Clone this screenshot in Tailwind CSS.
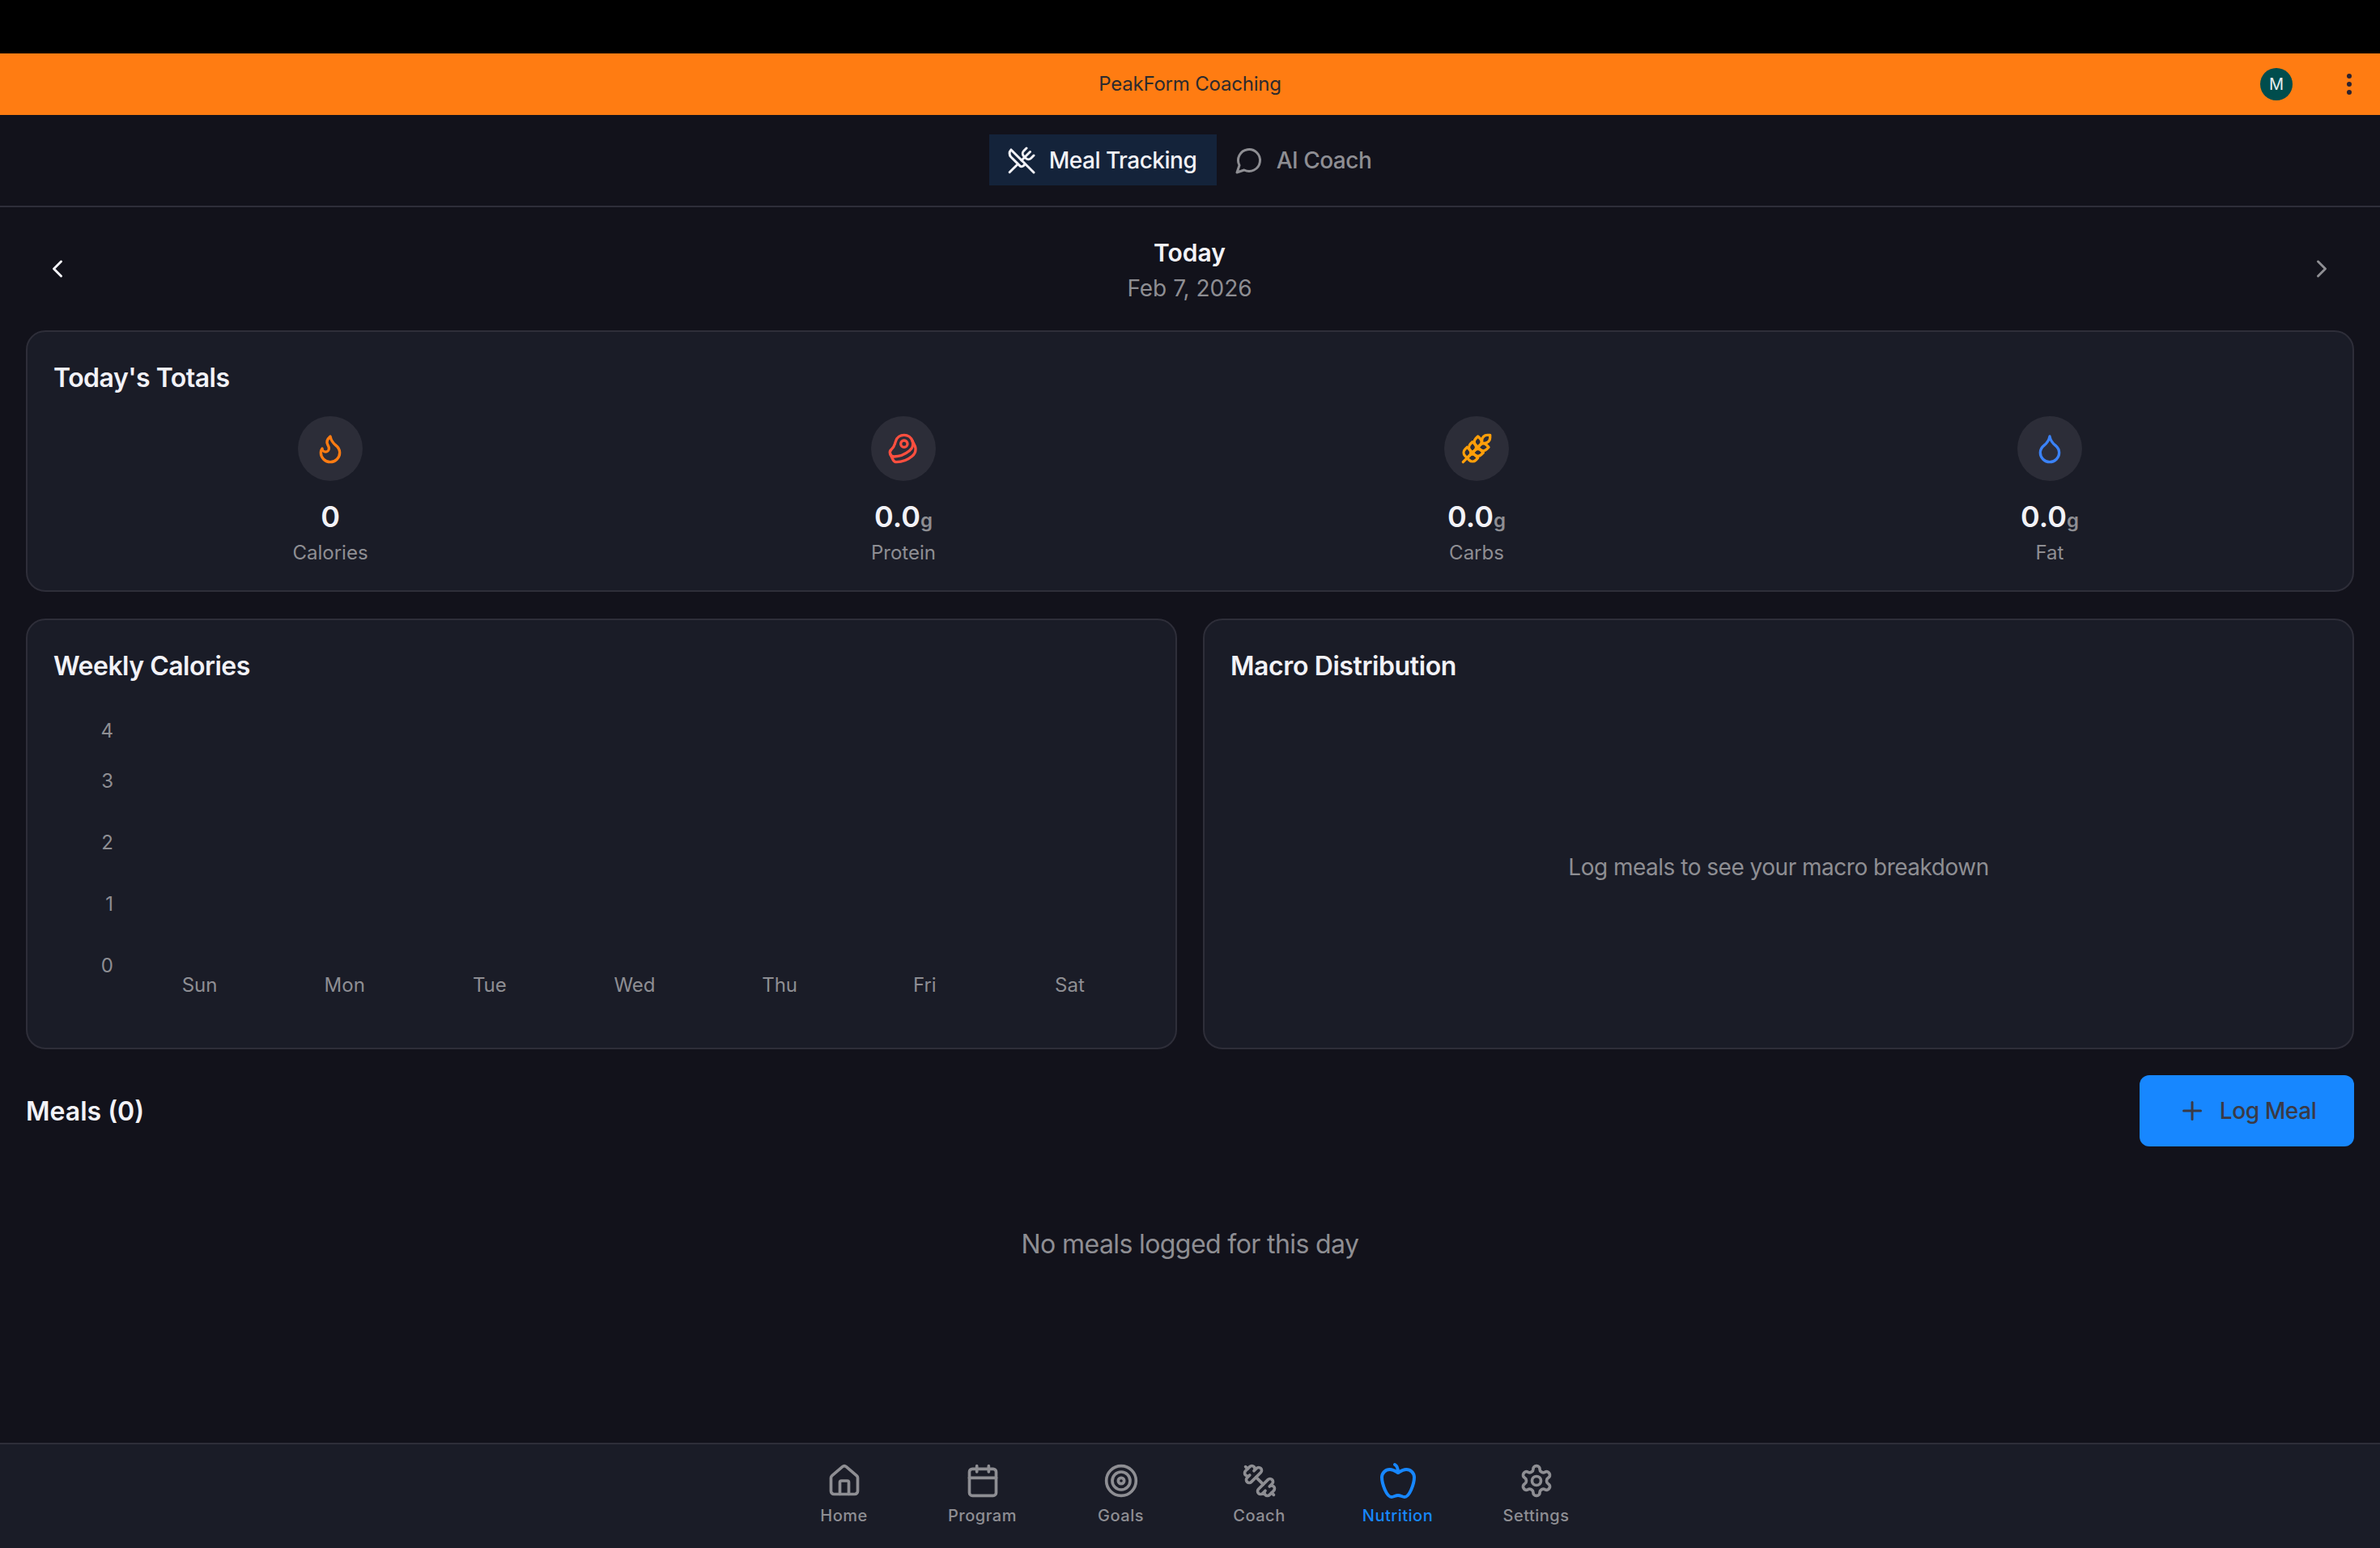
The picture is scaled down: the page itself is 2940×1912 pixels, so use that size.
<!DOCTYPE html>
<html lang="en">
<head>
  <meta charset="UTF-8">
  <title>PeakForm Coaching</title>
  <script src="https://cdn.jsdelivr.net/npm/@tailwindcss/browser@4"></script>
</head>
<body class="bg-black font-['Inter',sans-serif]">
<div class="w-[2940px] h-[1912px] flex flex-col overflow-hidden">

  <!-- status bar -->
  <div class="h-[66px] bg-black"></div>

  <!-- org banner -->
  <header class="relative h-[76px] bg-[#ff7c12] flex items-center justify-center">
    <span class="text-[24px] tracking-[-0.2px] text-[#2c2a2e]">PeakForm Coaching</span>
    <div class="absolute left-[2792px] top-[18px] w-[40px] h-[40px] rounded-full bg-[#004d4d] flex items-center justify-center text-[20px] text-[#e8f0f0]">M</div>
    <div class="absolute left-[2899px] top-[25px] flex flex-col gap-[4px]">
      <span class="w-[6px] h-[6px] rounded-full bg-[#2c2230]"></span>
      <span class="w-[6px] h-[6px] rounded-full bg-[#2c2230]"></span>
      <span class="w-[6px] h-[6px] rounded-full bg-[#2c2230]"></span>
    </div>
  </header>

  <!-- tabs -->
  <nav class="h-[114px] bg-[#12121b] border-b-2 border-[#2e2e39] flex items-start justify-center pt-[24px]">
    <div class="flex items-center h-[63px] w-[281px] pl-[22px] gap-[16px] bg-[#14233a] text-[#f2f2f7]">
      <svg class="w-[36px] h-[36px]" viewBox="0 0 24 24" fill="none" stroke="currentColor" stroke-width="2" stroke-linecap="round" stroke-linejoin="round"><path d="m16 2-2.3 2.3a3 3 0 0 0 0 4.2l1.8 1.8a3 3 0 0 0 4.2 0L22 8"/><path d="M15 15 3.3 3.3a4.2 4.2 0 0 0 0 6l7.3 7.3c.7.7 2 .7 2.8 0L15 15Zm0 0 7 7"/><path d="m2.1 21.8 6.4-6.3"/><path d="m19 5-7 7"/></svg>
      <span class="text-[28px] font-medium tracking-[-0.5px]">Meal Tracking</span>
    </div>
    <div class="flex items-center h-[63px] pl-[22px] pr-[24px] gap-[16px] text-[#8e8e93]">
      <svg class="w-[36px] h-[36px]" viewBox="0 0 24 24" fill="none" stroke="currentColor" stroke-width="2" stroke-linecap="round" stroke-linejoin="round"><path d="M7.9 20A9 9 0 1 0 4 16.1L2 22Z"/></svg>
      <span class="text-[28px] font-medium tracking-[-0.5px]">AI Coach</span>
    </div>
  </nav>

  <main class="flex-1 bg-[#12121b] px-[32px] pt-[38px]">

    <!-- date switcher -->
    <div class="flex items-center justify-between h-[114px] pb-[36px]">
      <svg class="w-[36px] h-[36px] ml-[21px] -mt-[3px] text-[#f2f2f7]" viewBox="0 0 24 24" fill="none" stroke="currentColor" stroke-width="2" stroke-linecap="round" stroke-linejoin="round"><path d="m15 18-6-6 6-6"/></svg>
      <div class="flex flex-col items-center">
        <span class="text-[30px] leading-[40px] font-semibold text-[#f2f2f7]">Today</span>
        <span class="text-[28px] leading-[36px] mt-[6px] text-[#8e8e93]">Feb 7, 2026</span>
      </div>
      <svg class="w-[36px] h-[36px] mr-[22px] -mt-[3px] text-[#8e8e93]" viewBox="0 0 24 24" fill="none" stroke="currentColor" stroke-width="2" stroke-linecap="round" stroke-linejoin="round"><path d="m9 18 6-6-6-6"/></svg>
    </div>

    <!-- today's totals -->
    <section class="h-[323px] rounded-[24px] border-2 border-[#2e2e39] bg-[#1a1c27] px-[32px] pt-[32px]">
      <h2 class="text-[32px] leading-[50px] font-semibold tracking-[-0.5px] text-[#f2f2f7]">Today's Totals</h2>
      <div class="grid grid-cols-4 -mx-[12px] mt-[22px]">
        <div class="flex flex-col items-center">
          <div class="w-[80px] h-[80px] rounded-full bg-[#2c2d38] flex items-center justify-center text-[#ff7c12]">
            <svg class="w-[40px] h-[40px]" viewBox="0 0 24 24" fill="none" stroke="currentColor" stroke-width="2" stroke-linecap="round" stroke-linejoin="round"><path d="M8.5 14.5A2.5 2.5 0 0 0 11 12c0-1.38-.5-2-1-3-1.072-2.143-.224-4.054 2-6 .5 2.5 2 4.9 4 6.5 2 1.6 3 3.5 3 5.5a7 7 0 1 1-14 0c0-1.153.433-2.294 1-3a2.5 2.5 0 0 0 2.5 2.5z"/></svg>
          </div>
          <div class="mt-[20px] h-[48px] leading-[48px] text-[36px] font-semibold text-[#f2f2f7]">0</div>
          <div class="mt-[3px] text-[24px] leading-[36px] text-[#8e8e93]">Calories</div>
        </div>
        <div class="flex flex-col items-center">
          <div class="w-[80px] h-[80px] rounded-full bg-[#2c2d38] flex items-center justify-center text-[#ff4f3f]">
            <svg class="w-[40px] h-[40px]" viewBox="0 0 24 24" fill="none" stroke="currentColor" stroke-width="2" stroke-linecap="round" stroke-linejoin="round"><circle cx="12.5" cy="8.5" r="2.5"/><path d="M12.5 2a6.5 6.5 0 0 0-6.22 4.6c-1.1 3.13-.78 3.9-3.18 6.08A3 3 0 0 0 5 18c4 0 8.4-1.8 11.4-4.3A6.5 6.5 0 0 0 12.5 2Z"/><path d="m18.5 6 2.19 4.5a6.48 6.48 0 0 1 .31 2 6.49 6.49 0 0 1-2.6 5.2C15.4 20.2 11 22 7 22a3 3 0 0 1-2.68-1.66L2.4 16.5"/></svg>
          </div>
          <div class="mt-[20px] h-[48px] leading-[48px] text-[36px] font-semibold text-[#f2f2f7]">0.0<span class="text-[24px] font-semibold text-[#8e8e93]">g</span></div>
          <div class="mt-[3px] text-[24px] leading-[36px] text-[#8e8e93]">Protein</div>
        </div>
        <div class="flex flex-col items-center">
          <div class="w-[80px] h-[80px] rounded-full bg-[#2c2d38] flex items-center justify-center text-[#ff9f0a]">
            <svg class="w-[40px] h-[40px]" viewBox="0 0 24 24" fill="none" stroke="currentColor" stroke-width="2" stroke-linecap="round" stroke-linejoin="round"><path d="M2 22 16 8"/><path d="M3.47 12.53 5 11l1.53 1.53a3.5 3.5 0 0 1 0 4.94L5 19l-1.53-1.53a3.5 3.5 0 0 1 0-4.94Z"/><path d="M7.47 8.53 9 7l1.53 1.53a3.5 3.5 0 0 1 0 4.94L9 15l-1.53-1.53a3.5 3.5 0 0 1 0-4.94Z"/><path d="M11.47 4.53 13 3l1.53 1.53a3.5 3.5 0 0 1 0 4.94L13 11l-1.53-1.53a3.5 3.5 0 0 1 0-4.94Z"/><path d="M20 2h2v2a4 4 0 0 1-4 4h-2V6a4 4 0 0 1 4-4Z"/><path d="M11.47 17.47 13 19l-1.53 1.53a3.5 3.5 0 0 1-4.94 0L5 19l1.53-1.53a3.5 3.5 0 0 1 4.94 0Z"/><path d="M15.47 13.47 17 15l-1.53 1.53a3.5 3.5 0 0 1-4.94 0L9 15l1.53-1.53a3.5 3.5 0 0 1 4.94 0Z"/><path d="M19.47 9.47 21 11l-1.53 1.53a3.5 3.5 0 0 1-4.94 0L13 11l1.53-1.53a3.5 3.5 0 0 1 4.94 0Z"/></svg>
          </div>
          <div class="mt-[20px] h-[48px] leading-[48px] text-[36px] font-semibold text-[#f2f2f7]">0.0<span class="text-[24px] font-semibold text-[#8e8e93]">g</span></div>
          <div class="mt-[3px] text-[24px] leading-[36px] text-[#8e8e93]">Carbs</div>
        </div>
        <div class="flex flex-col items-center">
          <div class="w-[80px] h-[80px] rounded-full bg-[#2c2d38] flex items-center justify-center text-[#3b82f6]">
            <svg class="w-[40px] h-[40px]" viewBox="0 0 24 24" fill="none" stroke="currentColor" stroke-width="2" stroke-linecap="round" stroke-linejoin="round"><path d="M12 22a7 7 0 0 0 7-7c0-2-1-3.9-3-5.5s-3.5-4-4-6.5c-.5 2.5-2 4.9-4 6.5C6 11.1 5 13 5 15a7 7 0 0 0 7 7z"/></svg>
          </div>
          <div class="mt-[20px] h-[48px] leading-[48px] text-[36px] font-semibold text-[#f2f2f7]">0.0<span class="text-[24px] font-semibold text-[#8e8e93]">g</span></div>
          <div class="mt-[3px] text-[24px] leading-[36px] text-[#8e8e93]">Fat</div>
        </div>
      </div>
    </section>

    <!-- charts -->
    <div class="grid grid-cols-2 gap-[32px] mt-[33px]">
      <section class="h-[532px] rounded-[24px] border-2 border-[#2e2e39] bg-[#1a1c27] px-[32px] pt-[32px]">
        <h2 class="text-[32px] leading-[50px] font-semibold tracking-[-0.5px] text-[#f2f2f7]">Weekly Calories</h2>
        <div class="flex mt-[37px] h-[350px] gap-[17px] text-[24px] leading-[36px] text-[#8e8e93]">
          <div class="w-[74px] h-[326px] flex flex-col text-right">
            <span>4</span>
            <span class="mt-[26px]">3</span>
            <span class="mt-[40px]">2</span>
            <span class="mt-[40px]">1</span>
            <span class="mt-[40px]">0</span>
          </div>
          <div class="w-[1254px] self-end grid grid-cols-7 text-center">
            <span>Sun</span><span>Mon</span><span>Tue</span><span>Wed</span><span>Thu</span><span>Fri</span><span>Sat</span>
          </div>
        </div>
      </section>
      <section class="h-[532px] rounded-[24px] border-2 border-[#2e2e39] bg-[#1a1c27] px-[32px] pt-[32px] flex flex-col">
        <h2 class="text-[32px] leading-[50px] font-semibold tracking-[-0.4px] text-[#f2f2f7]">Macro Distribution</h2>
        <div class="flex-1 flex items-center justify-center pt-[32px] pb-[32px] text-[28px] tracking-[-0.5px] text-[#8e8e93]">Log meals to see your macro breakdown</div>
      </section>
    </div>

    <!-- meals -->
    <div class="flex items-center justify-between mt-[32px]">
      <h2 class="text-[32px] font-semibold mt-[2px] text-[#f2f2f7]">Meals (0)</h2>
      <button class="w-[265px] h-[88px] rounded-[12px] bg-[#1787ff] flex items-center justify-center gap-[16px] text-[#3a3a45]">
        <svg class="w-[36px] h-[36px]" viewBox="0 0 24 24" fill="none" stroke="currentColor" stroke-width="2" stroke-linecap="round" stroke-linejoin="round"><path d="M5 12h14"/><path d="M12 5v14"/></svg>
        <span class="text-[28px] font-medium tracking-[-0.4px]">Log Meal</span>
      </button>
    </div>
    <p class="mt-[97px] text-center text-[32px] leading-[48px] tracking-[-0.6px] text-[#8e8e93]">No meals logged for this day</p>
  </main>

  <!-- bottom nav -->
  <footer class="h-[130px] bg-[#1a1c27] border-t-2 border-[#2e2e39] flex justify-center text-[#8e8e93]">
    <div class="w-[171px] flex flex-col items-center pt-[23px]">
      <svg class="w-[44px] h-[44px]" viewBox="0 0 24 24" fill="none" stroke="currentColor" stroke-width="2" stroke-linecap="round" stroke-linejoin="round"><path d="M15 21v-8a1 1 0 0 0-1-1h-4a1 1 0 0 0-1 1v8"/><path d="M3 10a2 2 0 0 1 .709-1.528l7-5.999a2 2 0 0 1 2.582 0l7 5.999A2 2 0 0 1 21 10v9a2 2 0 0 1-2 2H5a2 2 0 0 1-2-2z"/></svg>
      <span class="mt-[7px] text-[20px] leading-[28px] font-medium tracking-[0.5px]">Home</span>
    </div>
    <div class="w-[171px] flex flex-col items-center pt-[23px]">
      <svg class="w-[44px] h-[44px]" viewBox="0 0 24 24" fill="none" stroke="currentColor" stroke-width="2" stroke-linecap="round" stroke-linejoin="round"><path d="M8 2v4"/><path d="M16 2v4"/><rect width="18" height="18" x="3" y="4" rx="2"/><path d="M3 10h18"/></svg>
      <span class="mt-[7px] text-[20px] leading-[28px] font-medium tracking-[0.5px]">Program</span>
    </div>
    <div class="w-[171px] flex flex-col items-center pt-[23px]">
      <svg class="w-[44px] h-[44px]" viewBox="0 0 24 24" fill="none" stroke="currentColor" stroke-width="2" stroke-linecap="round" stroke-linejoin="round"><circle cx="12" cy="12" r="10"/><circle cx="12" cy="12" r="6"/><circle cx="12" cy="12" r="2"/></svg>
      <span class="mt-[7px] text-[20px] leading-[28px] font-medium tracking-[0.5px]">Goals</span>
    </div>
    <div class="w-[171px] flex flex-col items-center pt-[23px]">
      <svg class="w-[44px] h-[44px] -scale-x-100" viewBox="0 0 24 24" fill="none" stroke="currentColor" stroke-width="2" stroke-linecap="round" stroke-linejoin="round"><path d="M17.596 12.768a2 2 0 1 0 2.829-2.829l-1.768-1.767a2 2 0 0 0 2.828-2.829l-2.828-2.828a2 2 0 0 0-2.829 2.828l-1.767-1.768a2 2 0 1 0-2.829 2.829z"/><path d="m2.5 21.5 1.4-1.4"/><path d="m20.1 3.9 1.4-1.4"/><path d="M5.343 21.485a2 2 0 1 0 2.829-2.828l1.767 1.768a2 2 0 1 0 2.829-2.829l-6.364-6.364a2 2 0 1 0-2.829 2.829l1.768 1.767a2 2 0 0 0-2.828 2.829z"/><path d="m9.6 14.4 4.8-4.8"/></svg>
      <span class="mt-[7px] text-[20px] leading-[28px] font-medium tracking-[0.5px]">Coach</span>
    </div>
    <div class="w-[171px] flex flex-col items-center pt-[21px] text-[#1787ff]">
      <svg class="w-[48px] h-[48px]" viewBox="0 0 24 24" fill="none" stroke="currentColor" stroke-width="2" stroke-linecap="round" stroke-linejoin="round"><path d="M12 20.94c1.5 0 2.75 1.06 4 1.06 3 0 6-8 6-12.22A4.91 4.91 0 0 0 17 5c-2.22 0-4 1.44-5 2-1-.56-2.78-2-5-2a4.9 4.9 0 0 0-5 4.78C2 14 5 22 8 22c1.25 0 2.5-1.06 4-1.06Z"/><path d="M10 2c1 .5 2 2 2 5"/></svg>
      <span class="mt-[5px] text-[20px] leading-[28px] font-medium tracking-[0.5px]">Nutrition</span>
    </div>
    <div class="w-[171px] flex flex-col items-center pt-[23px]">
      <svg class="w-[44px] h-[44px]" viewBox="0 0 24 24" fill="none" stroke="currentColor" stroke-width="2" stroke-linecap="round" stroke-linejoin="round"><path d="M12.22 2h-.44a2 2 0 0 0-2 2v.18a2 2 0 0 1-1 1.73l-.43.25a2 2 0 0 1-2 0l-.15-.08a2 2 0 0 0-2.73.73l-.22.38a2 2 0 0 0 .73 2.73l.15.1a2 2 0 0 1 1 1.72v.51a2 2 0 0 1-1 1.74l-.15.09a2 2 0 0 0-.73 2.73l.22.38a2 2 0 0 0 2.73.73l.15-.08a2 2 0 0 1 2 0l.43.25a2 2 0 0 1 1 1.73V20a2 2 0 0 0 2 2h.44a2 2 0 0 0 2-2v-.18a2 2 0 0 1 1-1.73l.43-.25a2 2 0 0 1 2 0l.15.08a2 2 0 0 0 2.73-.73l.22-.39a2 2 0 0 0-.73-2.73l-.15-.08a2 2 0 0 1-1-1.74v-.5a2 2 0 0 1 1-1.74l.15-.09a2 2 0 0 0 .73-2.73l-.22-.38a2 2 0 0 0-2.73-.73l-.15.08a2 2 0 0 1-2 0l-.43-.25a2 2 0 0 1-1-1.73V4a2 2 0 0 0-2-2z"/><circle cx="12" cy="12" r="3"/></svg>
      <span class="mt-[7px] text-[20px] leading-[28px] font-medium tracking-[0.5px]">Settings</span>
    </div>
  </footer>
</div>
</body>
</html>
